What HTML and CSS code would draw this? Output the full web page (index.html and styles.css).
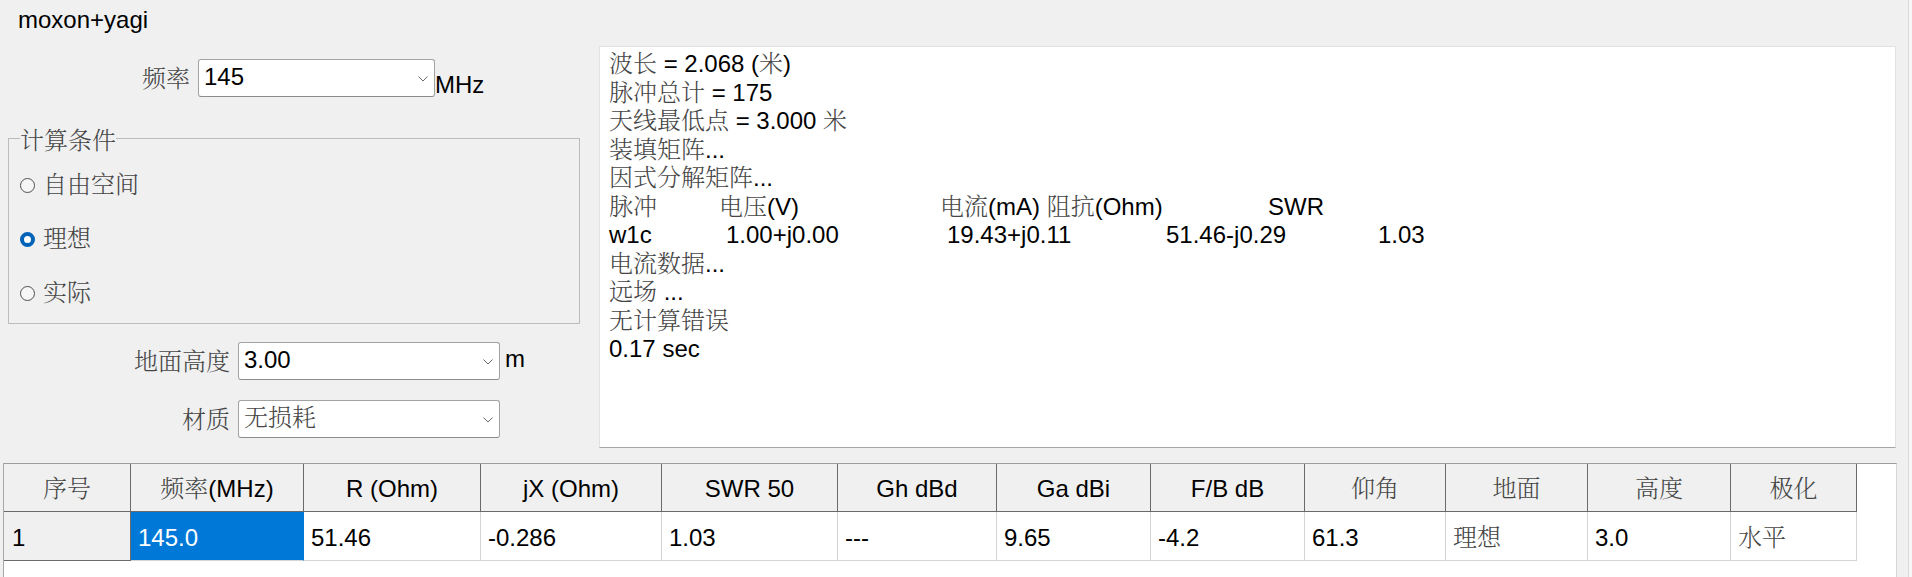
FILE: index.html
```html
<!DOCTYPE html>
<html lang="zh-CN">
<head>
<meta charset="utf-8">
<title>moxon+yagi</title>
<link rel="stylesheet" href="styles.css">
</head>
<body>
<div class="app">
  <div class="top">
    <div class="left">
      <div class="title">moxon+yagi</div>

      <div class="field-row freq-row">
        <span class="lbl lbl-freq zh">频率</span>
        <div class="combo combo-freq">
          <span class="val">145</span>
          <svg class="chev" width="10" height="6" viewBox="0 0 10 6"><polyline points="0.5,0.5 5,5 9.5,0.5" fill="none" stroke="#6a6a6a" stroke-width="1"/></svg>
        </div>
        <span class="unit unit-mhz">MHz</span>
      </div>

      <fieldset class="group">
        <legend class="zh">计算条件</legend>
        <div class="radio-row"><span class="radio"></span><span class="zh">自由空间</span></div>
        <div class="radio-row"><span class="radio on"></span><span class="zh">理想</span></div>
        <div class="radio-row"><span class="radio"></span><span class="zh">实际</span></div>
      </fieldset>

      <div class="field-row ground-row">
        <span class="lbl lbl-wide zh">地面高度</span>
        <div class="combo combo-wide">
          <span class="val">3.00</span>
          <svg class="chev" width="10" height="6" viewBox="0 0 10 6"><polyline points="0.5,0.5 5,5 9.5,0.5" fill="none" stroke="#6a6a6a" stroke-width="1"/></svg>
        </div>
        <span class="unit unit-m">m</span>
      </div>

      <div class="field-row mat-row">
        <span class="lbl lbl-wide zh">材质</span>
        <div class="combo combo-wide">
          <span class="val zh">无损耗</span>
          <svg class="chev" width="10" height="6" viewBox="0 0 10 6"><polyline points="0.5,0.5 5,5 9.5,0.5" fill="none" stroke="#6a6a6a" stroke-width="1"/></svg>
        </div>
      </div>
    </div>

    <div class="output">
      <div><span class="zh">波长</span> = 2.068 (<span class="zh">米</span>)</div>
      <div><span class="zh">脉冲总计</span> = 175</div>
      <div><span class="zh">天线最低点</span> = 3.000 <span class="zh">米</span></div>
      <div><span class="zh">装填矩阵</span>...</div>
      <div><span class="zh">因式分解矩阵</span>...</div>
      <div class="tabrow">
        <span class="t-h1 zh">脉冲</span>
        <span class="t-h2"><span class="zh">电压</span>(V)</span>
        <span class="t-h3"><span class="zh">电流</span>(mA) <span class="zh">阻抗</span>(Ohm)</span>
        <span>SWR</span>
      </div>
      <div class="tabrow">
        <span class="t-d1">w1c</span>
        <span class="t-d2">1.00+j0.00</span>
        <span class="t-d3">19.43+j0.11</span>
        <span class="t-d4">51.46-j0.29</span>
        <span>1.03</span>
      </div>
      <div><span class="zh">电流数据</span>...</div>
      <div><span class="zh">远场</span> ...</div>
      <div><span class="zh">无计算错误</span></div>
      <div>0.17 sec</div>
    </div>
  </div>

  <div class="grid">
    <div class="table">
      <div class="th zh">序号</div>
      <div class="th"><span class="zh">频率</span>(MHz)</div>
      <div class="th">R (Ohm)</div>
      <div class="th">jX (Ohm)</div>
      <div class="th">SWR 50</div>
      <div class="th">Gh dBd</div>
      <div class="th">Ga dBi</div>
      <div class="th">F/B dB</div>
      <div class="th zh">仰角</div>
      <div class="th zh">地面</div>
      <div class="th zh">高度</div>
      <div class="th zh">极化</div>

      <div class="rh">1</div>
      <div class="td sel">145.0</div>
      <div class="td">51.46</div>
      <div class="td">-0.286</div>
      <div class="td">1.03</div>
      <div class="td">---</div>
      <div class="td">9.65</div>
      <div class="td">-4.2</div>
      <div class="td">61.3</div>
      <div class="td zh">理想</div>
      <div class="td">3.0</div>
      <div class="td zh">水平</div>
    </div>
  </div>
</div>
</body>
</html>
```

FILE: styles.css
```css
html, body {
  margin: 0;
  padding: 0;
  background: #f7f7f7;
}

body {
  font-family: "Liberation Sans", "Noto Serif CJK SC", "Noto Sans CJK SC", sans-serif;
  font-size: 24px;
  color: #000;
  overflow: hidden;
}

.zh {
  color: #454545;
  font-weight: 300;
}

.app {
  width: 1908px;
  height: 577px;
  background: #f0f0f0;
  border-right: 1px solid #d8d8d8;
  display: flex;
  flex-direction: column;
  overflow: hidden;
}

.top {
  display: flex;
  align-items: flex-start;
}

.left {
  width: 599px;
  flex: none;
  padding-top: 6px;
}

.title {
  padding-left: 18px;
  line-height: 28px;
}

/* form rows */
.field-row {
  display: flex;
  align-items: flex-start;
}

.freq-row {
  margin-top: 25px;
}

.ground-row {
  margin-top: 18px;
}

.mat-row {
  margin-top: 20px;
}

.lbl {
  flex: none;
  text-align: right;
  line-height: 36px;
  padding-top: 2px;
  margin-right: 8px;
}

.lbl-freq {
  width: 190px;
}

.lbl-wide {
  width: 230px;
}

.combo {
  flex: none;
  box-sizing: border-box;
  height: 38px;
  background: #fff;
  border: 1px solid #a3a3a3;
  border-bottom-color: #8c8c8c;
  border-radius: 3px;
  padding: 0 6px 0 5px;
  display: flex;
  align-items: flex-start;
  justify-content: space-between;
}

.combo .val {
  line-height: 34px;
}

.combo .chev {
  margin-top: 16px;
  flex: none;
}

.combo-freq {
  width: 237px;
}

.combo-wide {
  width: 262px;
}

.unit {
  line-height: 28px;
}

.unit-mhz {
  margin-top: 12px;
}

.unit-m {
  margin-top: 3px;
  margin-left: 5px;
}

/* group box */
.group {
  margin: 22px 0 0 8px;
  width: 572px;
  box-sizing: border-box;
  border: 1px solid #bcbcbc;
  padding: 3px 0 3px 0;
  min-width: 0;
}

.group legend {
  margin-left: 11px;
  padding: 6px 0 0 0;
  line-height: 28px;
}

.radio-row {
  height: 54px;
  display: flex;
  align-items: center;
  padding-left: 11px;
}

.radio {
  box-sizing: border-box;
  width: 15px;
  height: 15px;
  border-radius: 50%;
  border: 1px solid #4f4f4f;
  background: #f6f6f6;
  margin-right: 8px;
  flex: none;
}

.radio.on {
  border: 4px solid #0063b8;
  background: #fff;
}

.radio-row .zh {
  line-height: 28px;
}

/* output text box */
.output {
  flex: 1;
  margin-top: 46px;
  margin-right: 12px;
  box-sizing: border-box;
  height: 402px;
  background: #fff;
  border: 1px solid #e2e2e2;
  border-bottom-color: #a6a6a6;
  padding: 3px 9px 0 9px;
  line-height: 28.5px;
  white-space: nowrap;
}

.tabrow {
  display: flex;
}

.tabrow > span {
  flex: none;
}

.t-h1 { width: 110px; }
.t-h2 { width: 221px; }
.t-h3 { width: 328px; }

.t-d1 { width: 117px; }
.t-d2 { width: 221px; }
.t-d3 { width: 219px; }
.t-d4 { width: 212px; }

/* data grid */
.grid {
  margin: 15px 11px 0 3px;
  flex: 1;
  background: #fff;
  border-top: 1px solid #9c9c9c;
  border-left: 1px solid #a8a8a8;
  border-right: 1px solid #d6d6d6;
}

.table {
  display: grid;
  grid-template-columns: 127px 173px 177px 181px 176px 159px 154px 154px 141px 142px 143px 126px;
  grid-template-rows: 48px 49px;
  width: 1853px;
}

.th {
  box-sizing: border-box;
  background: #f0f0f0;
  border-right: 1px solid #6a6a6a;
  border-bottom: 1px solid #6a6a6a;
  text-align: center;
  line-height: 44px;
  padding-top: 3px;
  white-space: nowrap;
}

.rh {
  box-sizing: border-box;
  background: #f0f0f0;
  border-right: 1px solid #6a6a6a;
  border-bottom: 1px solid #6a6a6a;
  padding: 3px 0 0 8px;
  line-height: 45px;
}

.td {
  box-sizing: border-box;
  background: #fff;
  border-right: 1px solid #d4d4d4;
  border-bottom: 1px solid #d4d4d4;
  padding: 3px 0 0 7px;
  line-height: 45px;
  white-space: nowrap;
}

.td.sel {
  background: #0078d7;
  color: #fff;
  border-right-color: #0078d7;
}
```
